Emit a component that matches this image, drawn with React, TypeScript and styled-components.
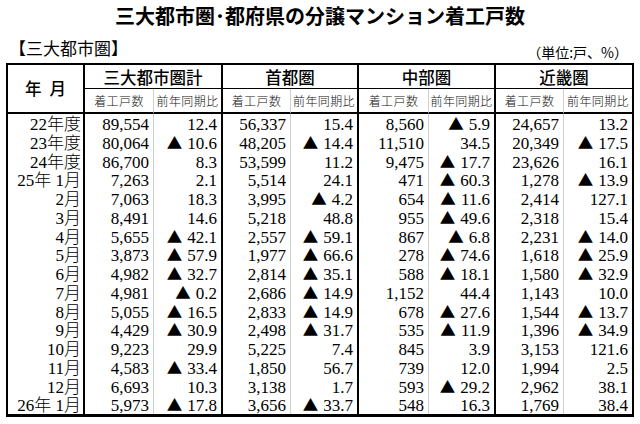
import React from "react";
import styled, { createGlobalStyle } from "styled-components";

const Global = createGlobalStyle`
  html, body { margin: 0; padding: 0; background: #fff; }
  * { box-sizing: border-box; }
`;

type Edge = "light" | "thick" | "none";

const edgeBorder = (e: Edge) =>
  e === "thick" ? "2px solid #000" : e === "light" ? "1px solid #cfcfcf" : "none";

const Page = styled.div`
  width: 640px;
  height: 424px;
  padding: 4px 6px 0;
  background: #fff;
  color: #000;
  font-family: "Noto Sans CJK JP", "Noto Sans", sans-serif;
`;

const Title = styled.h1`
  margin: 0;
  font-size: 20px;
  line-height: 24px;
  font-weight: 700;
  text-align: center;
`;

const CaptionRow = styled.div`
  display: flex;
  justify-content: space-between;
  align-items: flex-start;
  height: 25px;
  margin-top: 10px;
  padding: 0 6px 0 3px;
`;

const Caption = styled.div`
  font-size: 17px;
  line-height: 20px;
  font-weight: 400;
`;

const Unit = styled.div`
  font-size: 14px;
  line-height: 18px;
  padding-top: 5px;
`;

const Frame = styled.div`
  display: grid;
  grid-template-columns: 77px 69px 69px 68px 68px 70px 67px 68px 68px;
  width: 628px;
  border: 2px solid #000;
  border-bottom-width: 3px;
`;

const YearHead = styled.div`
  grid-row: span 2;
  display: flex;
  align-items: center;
  justify-content: center;
  gap: 8px;
  font-size: 16.5px;
  font-weight: 500;
  border-right: 2px solid #000;
  border-bottom: 2px solid #000;
  padding-bottom: 2px;
`;

const GroupHead = styled.div<{ $edge: Edge }>`
  grid-column: span 2;
  height: 24px;
  display: flex;
  align-items: center;
  justify-content: center;
  font-size: 16.5px;
  font-weight: 500;
  border-bottom: 1px solid #000;
  border-right: ${(p) => edgeBorder(p.$edge)};
`;

const SubHead = styled.div<{ $edge: Edge }>`
  height: 25px;
  display: flex;
  align-items: center;
  justify-content: center;
  font-size: 12px;
  font-weight: 300;
  letter-spacing: 0.4px;
  color: #111;
  border-bottom: 2px solid #000;
  border-right: ${(p) => edgeBorder(p.$edge)};
`;

const Cell = styled.div<{ $edge: Edge; $pad: number }>`
  height: 18.75px;
  padding-top: 4px;
  line-height: 14.75px;
  text-align: right;
  white-space: nowrap;
  padding-right: ${(p) => p.$pad}px;
  font-family: "Liberation Serif", "Noto Sans CJK JP", serif;
  font-size: 17px;
  font-weight: 300;
  border-right: ${(p) => edgeBorder(p.$edge)};
`;

const Tri = styled.span`
  font-family: "Noto Sans CJK JP", sans-serif;
  font-size: 15.5px;
  line-height: 0;
  margin-right: 5px;
`;

const groups = ["三大都市圏計", "首都圏", "中部圏", "近畿圏"];

const rows: string[][] = [
  ["22年度", "89,554", "12.4", "56,337", "15.4", "8,560", "▲5.9", "24,657", "13.2"],
  ["23年度", "80,064", "▲10.6", "48,205", "▲14.4", "11,510", "34.5", "20,349", "▲17.5"],
  ["24年度", "86,700", "8.3", "53,599", "11.2", "9,475", "▲17.7", "23,626", "16.1"],
  ["25年 1月", "7,263", "2.1", "5,514", "24.1", "471", "▲60.3", "1,278", "▲13.9"],
  ["2月", "7,063", "18.3", "3,995", "▲4.2", "654", "▲11.6", "2,414", "127.1"],
  ["3月", "8,491", "14.6", "5,218", "48.8", "955", "▲49.6", "2,318", "15.4"],
  ["4月", "5,655", "▲42.1", "2,557", "▲59.1", "867", "▲6.8", "2,231", "▲14.0"],
  ["5月", "3,873", "▲57.9", "1,977", "▲66.6", "278", "▲74.6", "1,618", "▲25.9"],
  ["6月", "4,982", "▲32.7", "2,814", "▲35.1", "588", "▲18.1", "1,580", "▲32.9"],
  ["7月", "4,981", "▲0.2", "2,686", "▲14.9", "1,152", "44.4", "1,143", "10.0"],
  ["8月", "5,055", "▲16.5", "2,833", "▲14.9", "678", "▲27.6", "1,544", "▲13.7"],
  ["9月", "4,429", "▲30.9", "2,498", "▲31.7", "535", "▲11.9", "1,396", "▲34.9"],
  ["10月", "9,223", "29.9", "5,225", "7.4", "845", "3.9", "3,153", "121.6"],
  ["11月", "4,583", "▲33.4", "1,850", "56.7", "739", "12.0", "1,994", "2.5"],
  ["12月", "6,693", "10.3", "3,138", "1.7", "593", "▲29.2", "2,962", "38.1"],
  ["26年 1月", "5,973", "▲17.8", "3,656", "▲33.7", "548", "16.3", "1,769", "38.4"],
];

const colEdge = (i: number): Edge => {
  if (i === 0) return "thick";
  if (i === 8) return "none";
  return i % 2 === 1 ? "light" : "thick";
};

const renderValue = (v: string) => {
  if (v.startsWith("▲")) {
    return (
      <>
        <Tri>▲</Tri>
        {v.slice(1)}
      </>
    );
  }
  return v;
};

export default function App() {
  return (
    <Page>
      <Global />
      <Title>三大都市圏･都府県の分譲マンション着工戸数</Title>
      <CaptionRow>
        <Caption>【三大都市圏】</Caption>
        <Unit>（単位:戸、%）</Unit>
      </CaptionRow>
      <Frame>
        <YearHead>
          <span>年</span>
          <span>月</span>
        </YearHead>
        {groups.map((g, i) => (
          <GroupHead key={g} $edge={i === 3 ? "none" : "thick"}>
            {g}
          </GroupHead>
        ))}
        {groups.map((g, i) => (
          <React.Fragment key={g + "sub"}>
            <SubHead $edge="light">着工戸数</SubHead>
            <SubHead $edge={i === 3 ? "none" : "thick"}>前年同期比</SubHead>
          </React.Fragment>
        ))}
        {rows.map((r) =>
          r.map((v, i) => (
            <Cell key={r[0] + i} $edge={colEdge(i)} $pad={i === 0 ? 2 : 4}>
              {renderValue(v)}
            </Cell>
          ))
        )}
      </Frame>
    </Page>
  );
}
